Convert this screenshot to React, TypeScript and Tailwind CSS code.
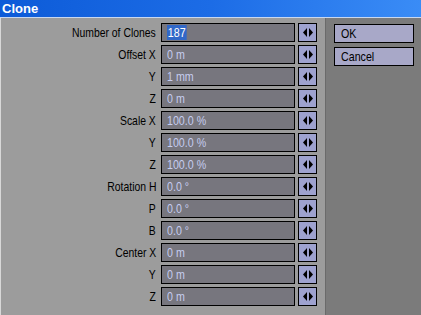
const rows: { label: string; value: string; selected?: boolean }[] = [
  { label: "Number of Clones", value: "187", selected: true },
  { label: "Offset X", value: "0 m" },
  { label: "Y", value: "1 mm" },
  { label: "Z", value: "0 m" },
  { label: "Scale X", value: "100.0 %" },
  { label: "Y", value: "100.0 %" },
  { label: "Z", value: "100.0 %" },
  { label: "Rotation H", value: "0.0 °" },
  { label: "P", value: "0.0 °" },
  { label: "B", value: "0.0 °" },
  { label: "Center X", value: "0 m" },
  { label: "Y", value: "0 m" },
  { label: "Z", value: "0 m" },
];

function Arrows() {
  return (
    <svg width="10" height="9" viewBox="0 0 10 9">
      <polygon points="4,0 4,9 0,4.5" fill="#000" />
      <polygon points="6,0 6,9 10,4.5" fill="#000" />
    </svg>
  );
}

export default function App() {
  return (
    <div className="flex h-[315px] w-[421px] flex-col overflow-hidden bg-[#9c9c9c] font-['Liberation_Sans',Arial,sans-serif] text-[13px] leading-none">
      <div className="flex h-[17px] items-center bg-gradient-to-r from-[#0c5bd8] via-[#1c6ce6] to-[#3a8cf6] pl-[2px] text-[13px] font-bold text-white">
        Clone
      </div>
      <div className="h-px bg-[#c8d8f0]" />
      <div className="flex flex-1">
        <div className="flex w-[325px] flex-col gap-[3px] border-l border-[#d8d8d8] pt-[5px]">
          {rows.map((r, i) => (
            <div key={i} className="flex h-[19px] items-center">
              <div className="w-[155px] whitespace-nowrap text-right text-black">
                <span className="inline-block origin-right scale-x-[0.8]">{r.label}</span>
              </div>
              <div className="ml-[5px] flex h-[19px] w-[134px] items-center border border-black bg-[#77767e] pl-[5px] text-[#c6cdf0]">
                <span className="inline-block origin-left scale-x-[0.82] whitespace-nowrap">
                  {r.selected ? (
                    <span className="bg-[#3168c8] px-px text-white">{r.value}</span>
                  ) : (
                    r.value
                  )}
                </span>
              </div>
              <div className="ml-[3px] flex h-[19px] w-[19px] items-center justify-center border border-black bg-[#9ea2cf]">
                <Arrows />
              </div>
            </div>
          ))}
        </div>
        <div className="flex flex-1 flex-col gap-[4px] border-l border-[#6a6a6a] bg-[#7b7b7b] pl-[8px] pt-[6px]">
          <div className="flex h-[19px] w-[80px] items-center border border-black bg-[#a8a8c8] pl-[6px] text-black">
            <span className="inline-block origin-left scale-x-[0.82]">OK</span>
          </div>
          <div className="flex h-[19px] w-[80px] items-center border border-black bg-[#a8a8c8] pl-[6px] text-black">
            <span className="inline-block origin-left scale-x-[0.82]">Cancel</span>
          </div>
        </div>
      </div>
    </div>
  );
}
